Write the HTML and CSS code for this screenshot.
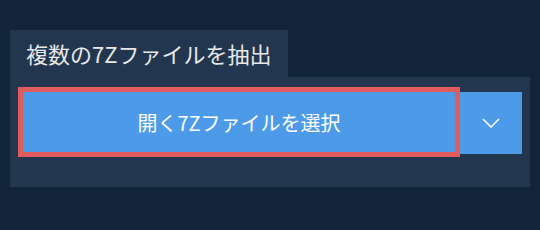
FILE: index.html
```html
<!DOCTYPE html>
<html lang="ja">
<head>
    <meta charset="UTF-8">
    <title>複数の7Zファイルを抽出</title>
    <link rel="stylesheet" href="styles.css">
</head>
<body>
    <div class="extract">
        <div class="tab">複数の7Zファイルを抽出</div>
        <div class="panel">
            <button class="btn-main">開く7Zファイルを選択</button>
            <button class="btn-drop">
                <svg width="18" height="10" viewBox="0 0 18 10">
                    <polyline points="1,1 9,9 17,1" fill="none" stroke="#fff" stroke-width="1.5"/>
                </svg>
            </button>
        </div>
    </div>
</body>
</html>
```

FILE: styles.css
```css
body {
    margin: 0;
    background: #12243a;
    font-family: "Noto Sans CJK JP", "Noto Sans", sans-serif;
}
.extract {
    width: 520px;
    padding: 30px 10px 0 10px;
}
.tab {
    display: inline-block;
    width: 246px;
    height: 47px;
    line-height: 46px;
    padding: 0 16px;
    background: #22374f;
    color: #e8e8e8;
    font-size: 22px;
    white-space: nowrap;
}
.panel {
    display: flex;
    align-items: flex-start;
    gap: 5px;
    padding: 15px 8px 33px 13px;
    background: #22374f;
}
.btn-main, .btn-drop {
    border: none;
    background: #4d9be8;
    color: #fff;
    font-family: inherit;
    padding: 0;
    cursor: pointer;
}
.btn-main {
    width: 432px;
    height: 60px;
    font-size: 20px;
    outline: 5px solid #e05c5c;
}
.btn-drop {
    width: 62px;
    height: 62px;
    display: flex;
    justify-content: center;
    align-items: center;
}
```
